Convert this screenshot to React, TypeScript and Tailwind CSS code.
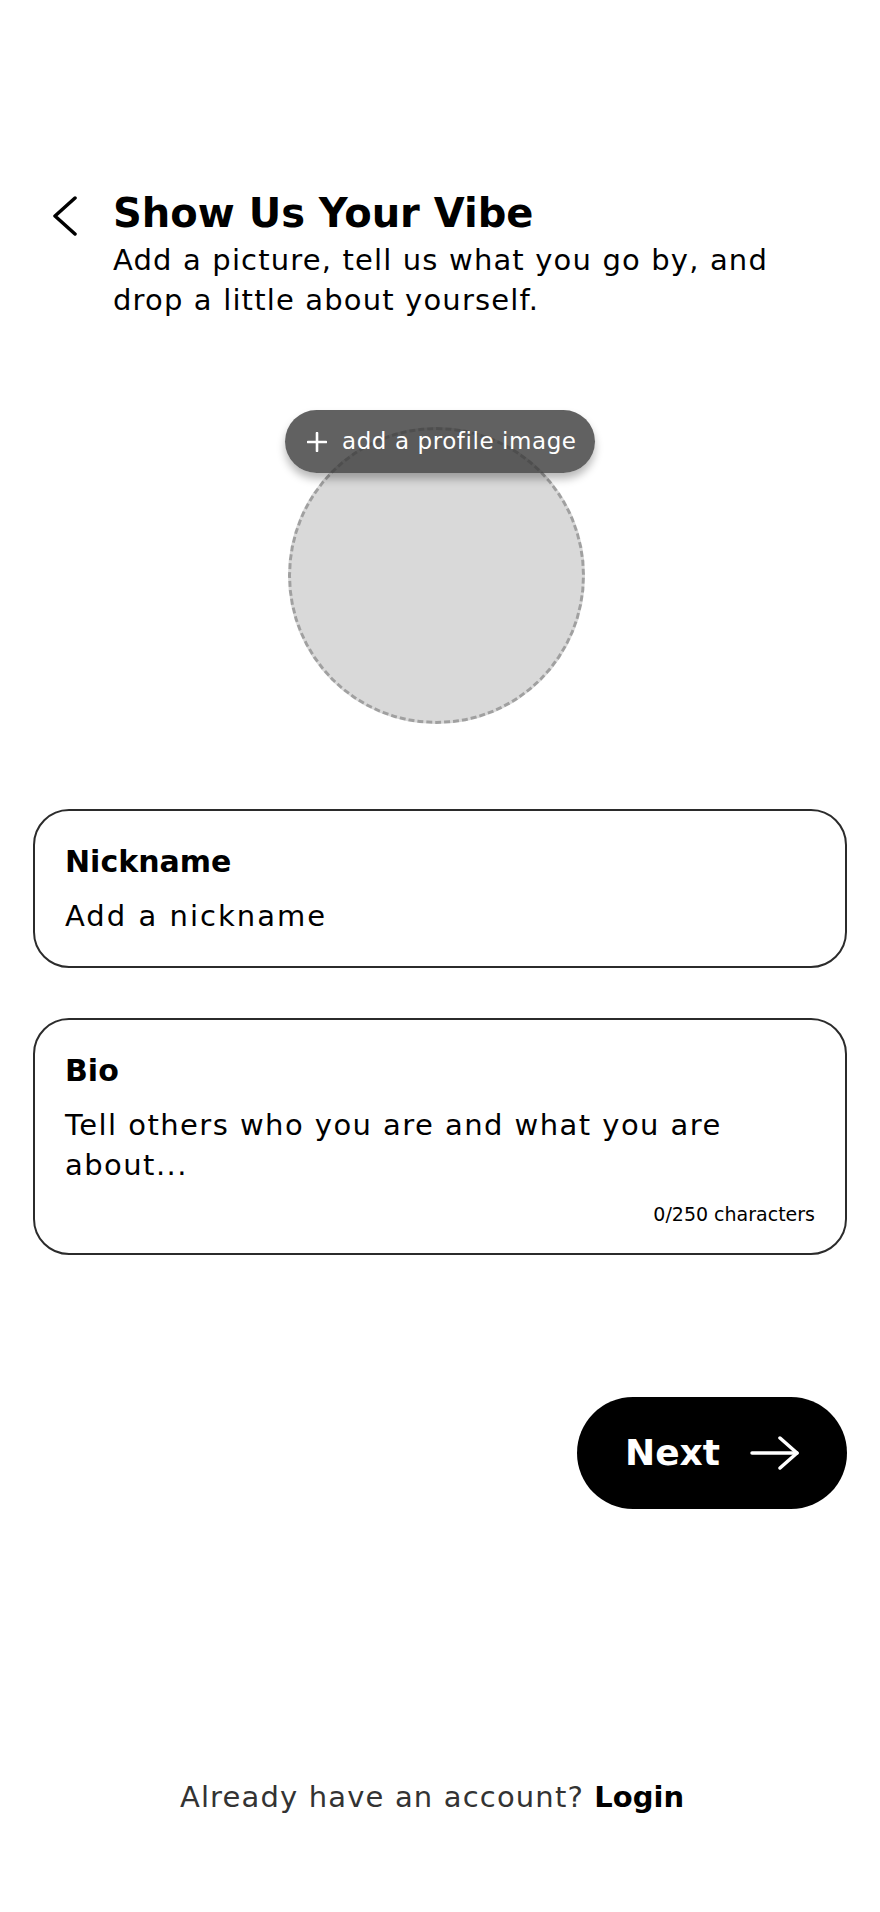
import React from "react";

const font = { fontFamily: "'DejaVu Sans', 'Noto Sans', sans-serif" };

function BackIcon() {
  return (
    <svg width="24" height="40" viewBox="0 0 24 40" fill="none">
      <polyline
        points="22,2 2,20 22,38"
        stroke="#000"
        strokeWidth="3.5"
        strokeLinecap="round"
        strokeLinejoin="round"
      />
    </svg>
  );
}

function ArrowIcon() {
  return (
    <svg width="50" height="34" viewBox="0 0 50 34" fill="none">
      <line x1="2" y1="17" x2="47" y2="17" stroke="#fff" strokeWidth="3.5" strokeLinecap="round" />
      <polyline
        points="30,2 47,17 30,32"
        stroke="#fff"
        strokeWidth="3.5"
        strokeLinecap="round"
        strokeLinejoin="round"
      />
    </svg>
  );
}

function Field({ label, children }: { label: string; children: React.ReactNode }) {
  return (
    <div className="border-2 border-[#2b2b2b] rounded-[36px] px-[30px] pt-[33px]">
      <div className="text-[30px] leading-[36px] font-bold text-black">{label}</div>
      <div className="mt-[16px]">{children}</div>
    </div>
  );
}

export default function App() {
  return (
    <div className="min-h-[1912px] bg-white flex flex-col px-[33px]" style={font}>
      {/* header */}
      <div className="flex items-start pt-[189px]">
        <div className="pl-[20px] pt-[7px] w-[80px] shrink-0">
          <BackIcon />
        </div>
        <div className="flex flex-col">
          <h1 className="text-[40px] leading-[48px] font-bold text-black">Show Us Your Vibe</h1>
          <p className="mt-[3px] text-[29px] leading-[40px] tracking-[0.04em] text-black">
            Add a picture, tell us what you go by, and
            <br />
            drop a little about yourself.
          </p>
        </div>
      </div>

      {/* profile image */}
      <div className="flex justify-center mt-[107px]">
        <div className="relative ml-[-8px]">
          <div className="w-[297px] h-[297px] rounded-full bg-[#d9d9d9] border-[3px] border-dashed border-[#a0a0a0]" />
          <button className="absolute top-[-17px] left-1/2 -translate-x-1/2 ml-[4px] w-[310px] h-[63px] rounded-full bg-[#3a3a3a]/80 shadow-[0_6px_8px_rgba(0,0,0,0.28)] flex items-center pl-[22px] gap-[15px] text-white">
            <svg width="20" height="20" viewBox="0 0 20 20" fill="none">
              <line x1="10" y1="1" x2="10" y2="19" stroke="#fff" strokeWidth="2.6" strokeLinecap="round" />
              <line x1="1" y1="10" x2="19" y2="10" stroke="#fff" strokeWidth="2.6" strokeLinecap="round" />
            </svg>
            <span className="text-[23px] leading-none tracking-[0.025em] whitespace-nowrap">add a profile image</span>
          </button>
        </div>
      </div>

      {/* fields */}
      <div className="flex flex-col gap-[50px] mt-[85px]">
        <Field label="Nickname">
          <div className="text-[29px] leading-[40px] tracking-[0.07em] text-black pb-[30px]">Add a nickname</div>
        </Field>
        <Field label="Bio">
          <div className="text-[29px] leading-[40px] tracking-[0.05em] text-black">
            Tell others who you are and what you are
            <br />
            about...
          </div>
          <div className="mt-[15px] pb-[25px] text-right text-[19px] leading-[28px] text-black">
            0/250 characters
          </div>
        </Field>
      </div>

      {/* next */}
      <div className="flex justify-end mt-[142px]">
        <button className="w-[270px] h-[112px] rounded-full bg-black flex items-center pl-[48px] gap-[30px] text-white">
          <span className="text-[36px] font-bold leading-none">Next</span>
          <ArrowIcon />
        </button>
      </div>

      {/* footer */}
      <div className="mt-[268px] pr-[16px] text-center text-[29px] leading-[40px] tracking-[0.04em]">
        <span className="text-[#333]">Already have an account? </span>
        <span className="font-bold text-black tracking-normal">Login</span>
      </div>
    </div>
  );
}
